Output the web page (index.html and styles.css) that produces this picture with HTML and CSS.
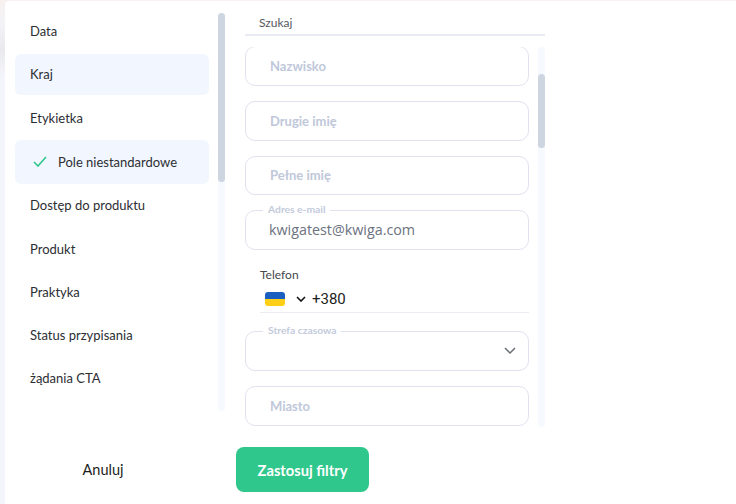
FILE: index.html
```html
<!DOCTYPE html>
<html lang="pl">
<head>
<meta charset="UTF-8">
<meta name="viewport" content="width=device-width, initial-scale=1.0">
<title>Filtry</title>
<link rel="stylesheet" href="styles.css">
</head>
<body>
<div class="panel">
  <div class="columns">
    <div class="menu-col">
      <ul class="menu">
        <li class="menu-item">Data</li>
        <li class="menu-item active">Kraj</li>
        <li class="menu-item">Etykietka</li>
        <li class="menu-item active checked">
          <svg class="check" width="14" height="11" viewBox="0 0 14 11"><path d="M1 6l4 4 8-9" fill="none" stroke="#2fc78c" stroke-width="1.6"/></svg>
          Pole niestandardowe
        </li>
        <li class="menu-item">Dostęp do produktu</li>
        <li class="menu-item">Produkt</li>
        <li class="menu-item">Praktyka</li>
        <li class="menu-item">Status przypisania</li>
        <li class="menu-item">żądania CTA</li>
      </ul>
      <div class="scrollbar menu-scroll"><div class="thumb"></div></div>
    </div>

    <div class="form-col">
      <div class="search">Szukaj</div>
      <div class="form-wrap">
        <div class="fields">
          <div class="field first"><span class="placeholder">Nazwisko</span></div>
          <div class="field"><span class="placeholder">Drugie imię</span></div>
          <div class="field"><span class="placeholder">Pełne imię</span></div>
          <div class="field">
            <span class="legend">Adres e-mail</span>
            <span class="value">kwigatest@kwiga.com</span>
          </div>
          <div class="phone">
            <div class="phone-label">Telefon</div>
            <div class="phone-row">
              <span class="flag"></span>
              <svg class="phone-arrow" width="10" height="6" viewBox="0 0 10 6"><path d="M1 1l4 4 4-4" fill="none" stroke="#111" stroke-width="1.6"/></svg>
              <span class="phone-code">+380</span>
            </div>
          </div>
          <div class="field select">
            <span class="legend">Strefa czasowa</span>
            <svg class="select-arrow" width="12" height="7" viewBox="0 0 12 7"><path d="M1 1l5 5 5-5" fill="none" stroke="#6b6f76" stroke-width="1.5"/></svg>
          </div>
          <div class="field"><span class="placeholder">Miasto</span></div>
        </div>
        <div class="scrollbar form-scroll"><div class="thumb"></div></div>
      </div>
    </div>
  </div>

  <div class="actions">
    <button class="btn-cancel">Anuluj</button>
    <button class="btn-apply">Zastosuj filtry</button>
  </div>
</div>
</body>
</html>
```

FILE: styles.css
```css
* {
  box-sizing: border-box;
}
html, body {
  height: 100%;
}
body {
  margin: 0;
  padding: 1px 0 0 5px;
  background: linear-gradient(#f7f0ef 0, #f3f3f7 25px, #e9e9ed 50px, #f4f5fb 75px);
  font-family: "Lato", sans-serif;
  overflow: hidden;
}
.panel {
  height: 503px;
  background: #fff;
  border-top-left-radius: 4px;
  display: flex;
  flex-direction: column;
}
.columns {
  display: flex;
  height: 446px;
}
.menu-col {
  width: 231px;
  padding: 12px 0 0 10px;
  display: flex;
}
.menu {
  list-style: none;
  margin: -3.5px 9px 0 0;
  padding: 0;
  width: 194px;
}
.menu-item {
  height: 43.3px;
  display: flex;
  align-items: center;
  gap: 11px;
  padding-left: 15px;
  font-size: 13px;
  color: #2b2e33;
  border-radius: 6px;
}
.menu-item.active {
  background: #f2f6fe;
  height: 41px;
  margin: 1px 0 1.5px;
}
.menu-item.checked {
  height: 44px;
  margin: 0;
  padding-left: 18px;
}
.scrollbar {
  width: 7px;
  background: #f6f9fd;
  border-radius: 4px;
  flex: none;
}
.thumb {
  background: #cdd5e0;
  border-radius: 4px;
}
.menu-scroll {
  height: 398px;
}
.menu-scroll .thumb {
  height: 169px;
}
.form-col {
  width: 300px;
  margin-left: 9px;
}
.search {
  height: 35px;
  padding: 14px 0 0 14px;
  border-bottom: 2px solid #e8ebf1;
  font-size: 12px;
  line-height: 15px;
  color: #55585e;
}
.form-wrap {
  display: flex;
  justify-content: space-between;
  height: 380px;
  margin-top: 11px;
}
.fields {
  width: 284px;
  overflow: hidden;
}
.field {
  position: relative;
  height: 39.5px;
  margin-bottom: 15px;
  padding-left: 24px;
  display: flex;
  align-items: center;
  border: 1px solid #e1e2f0;
  border-radius: 10px;
  background: #fff;
}
.field.first {
  height: 40px;
  margin-top: -1px;
}
.field.select {
  margin-bottom: 15.5px;
}
.placeholder {
  font-size: 13px;
  font-weight: 700;
  color: #bfc8da;
}
.legend {
  position: absolute;
  left: 17px;
  top: -8px;
  padding: 0 5px;
  background: #fff;
  font-size: 10.3px;
  line-height: 13px;
  font-weight: 700;
  color: #c3cbdb;
}
.value {
  margin-left: -1px;
  font-family: "Open Sans", sans-serif;
  font-size: 14.3px;
  color: #6c7280;
}
.phone {
  height: 50px;
  margin: -2px 0 18.5px 15px;
  padding-top: 4px;
  border-bottom: 1px solid #ebedf2;
}
.phone-label {
  font-size: 12px;
  line-height: 15px;
  color: #44474d;
}
.phone-row {
  display: flex;
  align-items: center;
  height: 24px;
  margin-top: 5px;
  padding-left: 5px;
}
.flag {
  width: 20px;
  height: 14px;
  border-radius: 3px;
  background: linear-gradient(#1a5fc0 50%, #fdcf16 50%);
}
.phone-arrow {
  margin-left: 11px;
}
.phone-code {
  margin-left: 6px;
  font-family: "Roboto", sans-serif;
  font-size: 15px;
  color: #1c1e21;
}
.select-arrow {
  position: absolute;
  right: 12px;
  top: 15px;
}
.form-scroll {
  height: 380px;
  padding-top: 27px;
}
.form-scroll .thumb {
  height: 74px;
}
.actions {
  display: flex;
  align-items: center;
  height: 45px;
}
.btn-cancel {
  width: 196px;
  border: 0;
  background: none;
  font-family: inherit;
  font-size: 14.5px;
  color: #1c1e21;
}
.btn-apply {
  width: 133px;
  height: 45px;
  margin-left: 35px;
  border: 0;
  border-radius: 8px;
  background: #2fc78c;
  color: #fff;
  font-family: inherit;
  font-size: 14.7px;
  font-weight: 700;
}
```
